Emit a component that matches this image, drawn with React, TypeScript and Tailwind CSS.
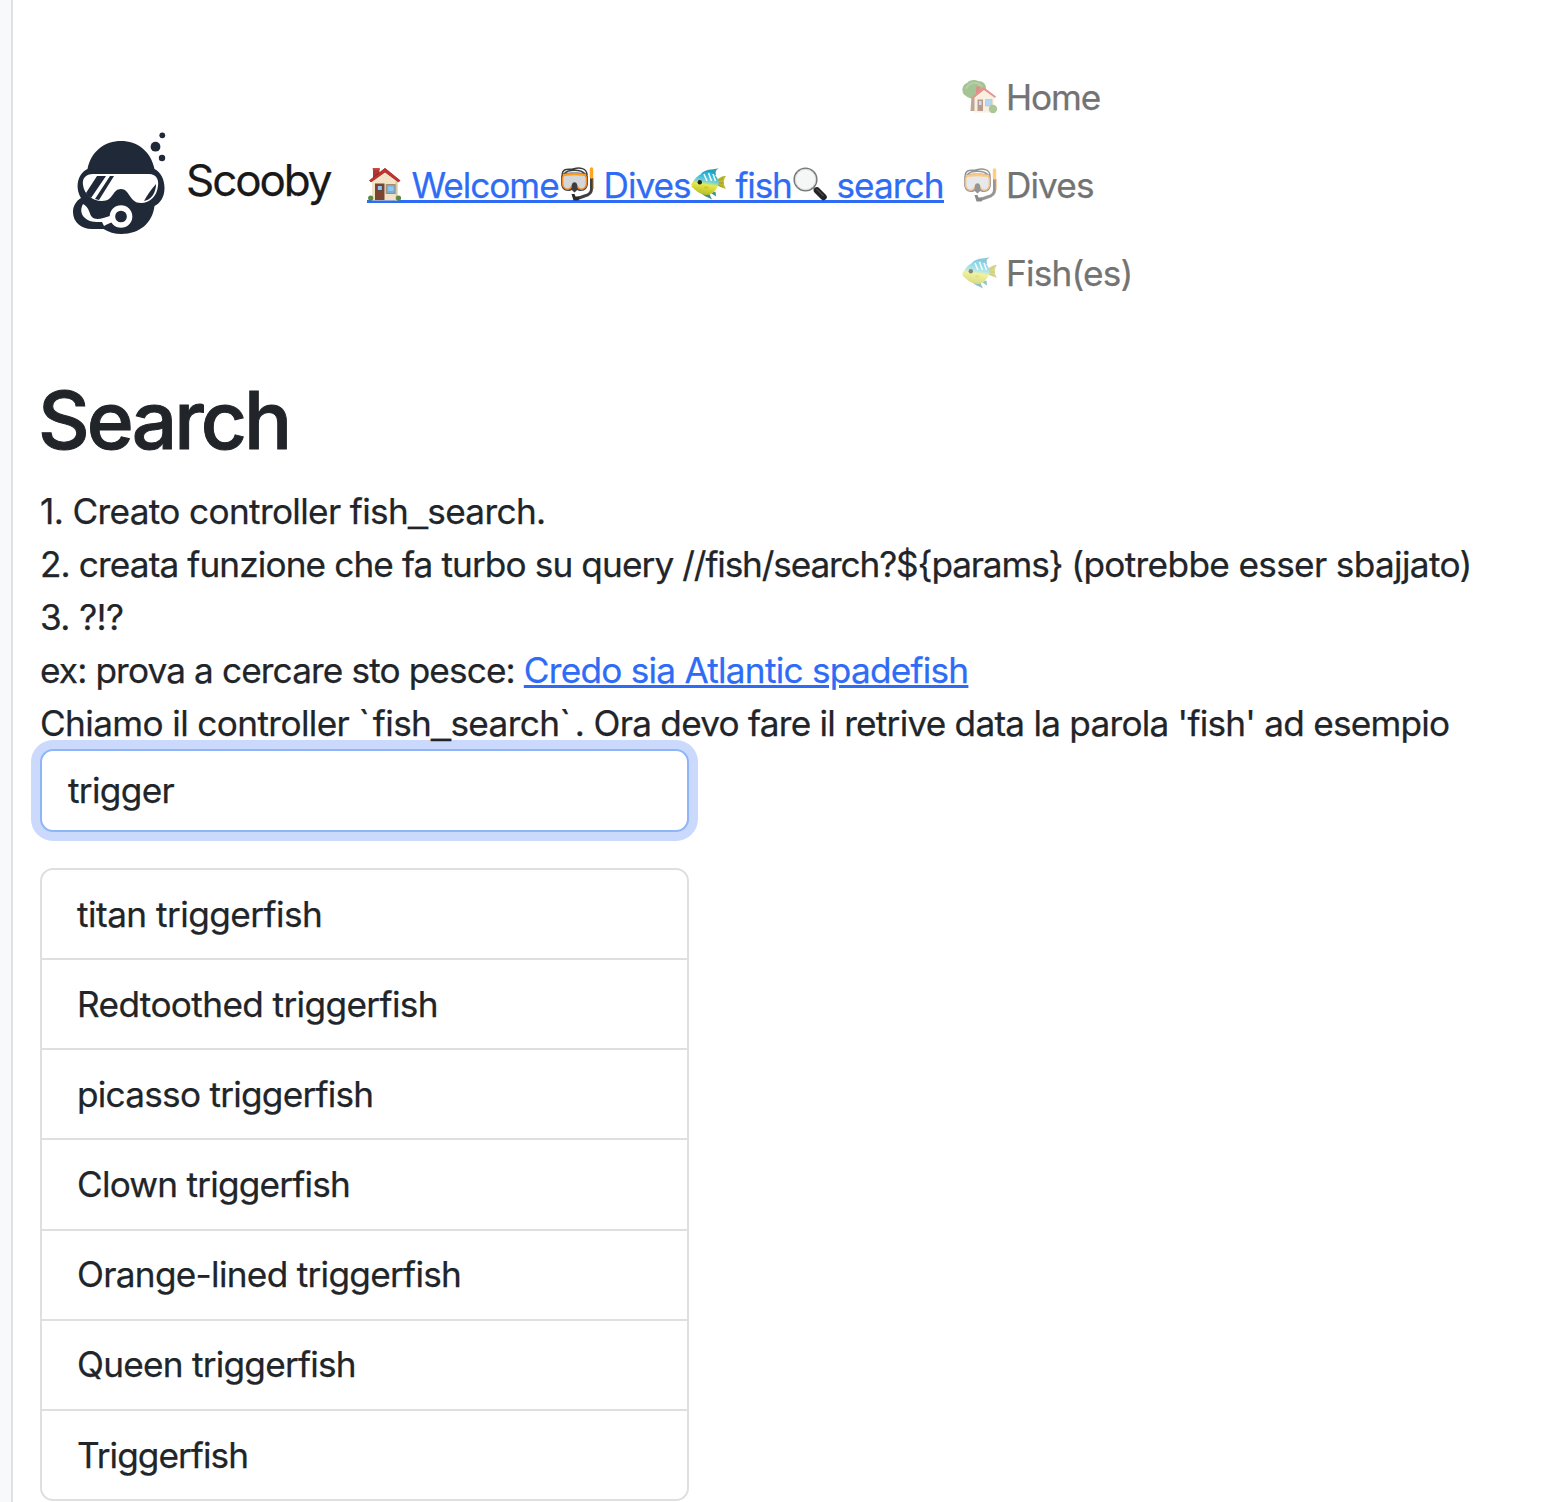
import type { ReactNode } from "react";

function HouseIcon() {
  return (
    <svg viewBox="0 0 36 36" className="relative block size-[36px] shrink-0">
      <path d="M6 2.500h6.500v8L6 14z" fill="#a83a32" />
      <path d="M5.700 2h7v2h-7z" fill="#c9473c" />
      <path d="M5 15 18 5l12.500 10v19.500H5z" fill="#f3e3c6" />
      <path d="M28.500 15h2v19.500h-2z" fill="#dbc7a5" />
      <path d="M2.500 14.500 18 2.300 33 14.500l-1.500 1.500L18 6 4 16z" fill="#cf2f2b" stroke="#7c2320" strokeWidth=".7" />
      <path d="M8 17.500h9.500v16.500H8z" fill="#7c4530" />
      <path d="M10.300 19.500h5v5h-5z" fill="#8fc8f2" stroke="#4f2b1f" strokeWidth=".7" />
      <path d="M19.200 18.500h9v9h-9z" fill="#7cabd0" stroke="#a28a6a" strokeWidth="1" />
      <path d="M21 20.500h5.500v4.500H21z" fill="#8cc8f2" />
      <circle cx="3.700" cy="32" r="2.600" fill="#5b8a3b" />
      <circle cx="31.500" cy="32" r="2.600" fill="#5b8a3b" />
    </svg>
  );
}

function GardenHouseIcon() {
  return (
    <svg viewBox="0 0 36 36" className="block size-[36px] shrink-0">
      <path d="M9.500 17h4l1 15h-6z" fill="#8b5d3b" />
      <path d="M.5 12C0 8 2 5 5 4c2-3 8-4 11-2 5 0 8 3 8 7 0 4-4 9-9 10-4 1.500-9 0-11-2-2-1-3.500-3-3.500-5z" fill="#5c9440" />
      <path d="M4 10c2-5 5-6 9-6 3 0 5 1 7 4" fill="none" stroke="#79ad55" strokeWidth="2" />
      <path d="M14 7.500h4.500v7H14z" fill="#c0392f" />
      <path d="M12.500 18.500 22 10l10 8.500v15H12.500z" fill="#f4e4c7" />
      <path d="M9.500 18.500 21.500 8 34 17.500l-1 1.500-11-8L10.500 20z" fill="#d63a33" />
      <path d="M15.500 20.500H21V32h-5.500z" fill="#81492f" />
      <path d="M17 22h2.500v4H17z" fill="#a9c7dd" />
      <path d="M23.500 20.500H30V27h-6.500z" fill="#78b6e6" stroke="#ac9472" strokeWidth=".8" />
      <circle cx="31" cy="30" r="4.200" fill="#699b43" />
    </svg>
  );
}

function MaskIcon() {
  return (
    <svg viewBox="0 0 36 36" className="relative block size-[36px] shrink-0">
      <path d="M3 8.500C4 1 10 4.500 15 2.800S28 2 28 9M5 8c4-5 17-5 21 0" fill="none" stroke="#3a3b3d" strokeWidth="1.500" />
      <path d="M32.500 4v19c0 4-3 6-7 7l-7 2.500" fill="none" stroke="#3e3f42" strokeWidth="3" strokeLinecap="round" />
      <path d="M32.500 3v8" stroke="#ffa51e" strokeWidth="3.400" strokeLinecap="round" />
      <path d="M34.200 12v11" stroke="#f08a18" strokeWidth="1" />
      <path d="M12.500 28h3l1 2.500h4l-1 4h-5z" fill="#292a2c" />
      <path d="M2 11c0-4 4-4.500 13.500-4.500S29 7 29 11v6c0 5-3 8-7 8-4 0-4.500-2-6.500-2S13 25 9 25c-4 0-7-3-7-8z" fill="#44474a" />
      <path d="M3.500 11.500C4 8.500 7 8.300 15.500 8.300s11.500.2 12 3.200v5.500c0 3.800-2.500 6.300-5.500 6.300-4 0-3.500-5.300-6.500-5.300s-2.500 5.300-6.500 5.300c-3 0-5.500-2.500-5.500-6.300z" fill="#d4d6d8" stroke="#f08a26" strokeWidth="1.600" />
      <path d="M4 9.300c4-1.500 19-1.500 23 0" fill="none" stroke="#ff9c1c" strokeWidth="2.200" />
      <path d="M12.800 24v-4.500c0-4.500 5.400-4.500 5.400 0V24l-2.700 2.500z" fill="#3b3d40" />
    </svg>
  );
}

function FishIcon({ id }: { id: string }) {
  return (
    <svg viewBox="0 0 36 36" className="relative block size-[36px] shrink-0">
      <defs>
        <linearGradient id={id} x1="0.600" y1="0" x2="0.400" y2="1">
          <stop offset="0.120" stopColor="#2bb4da" />
          <stop offset="0.420" stopColor="#7fd3d2" />
          <stop offset="0.540" stopColor="#e6e84c" />
          <stop offset="1" stopColor="#b7bb20" />
        </linearGradient>
      </defs>
      <path d="M10 8C14 3 20 4 28 2.300c-3 1.500-4 3-3 6.700z" fill="#2a9dbb" />
      <path d="M10 27c3 3 6 4 11 6.500L18 27zM20 27l5 3.500-.5-5z" fill="#3c8e91" />
      <path d="M25 15c3-3 5-5 10-5-3 4-3 8 0 13-4-1-7-3-10-4z" fill="#bdb92e" />
      <path d="M27 17h6M27 15l5-3M27 19l5 2" stroke="#8d9020" strokeWidth=".6" />
      <path d="M0 19C4 11 10 6.500 17 6c6 0 10 5 11 11-2 7-7 12-13 12C8 28 4 24 0 20l2-1z" fill={`url(#${id})`} />
      <path d="m13 8 3 7M17.500 7l3 8M22 8l2.500 7" stroke="#e9f9f8" strokeWidth="1.600" />
      <circle cx="8.800" cy="16.300" r="2.200" fill="#20251f" />
      <path d="M14 20c2 0 3 1 4 2-2 1-4 1-5 0" fill="#c8cb2c" />
    </svg>
  );
}

function LensIcon() {
  return (
    <svg viewBox="0 0 36 36" className="relative block size-[36px] shrink-0">
      <path d="m21 21 3 3" stroke="#8d8f91" strokeWidth="3" />
      <path d="m25 24.500 6.500 6.500" stroke="#232426" strokeWidth="6.500" strokeLinecap="round" />
      <path d="m24.500 23 7 7" stroke="#65686a" strokeWidth="1" />
      <circle cx="13.500" cy="13.500" r="11.300" fill="#f5f6f6" stroke="#77797b" strokeWidth="1.600" />
      <circle cx="13.500" cy="13.500" r="10.200" fill="none" stroke="#d8d9da" strokeWidth="1" />
    </svg>
  );
}

function Logo() {
  return (
    <svg viewBox="0 0 120 125" className="block h-[125px] w-[120px]">
      <g fill="#1f2937">
        <circle cx="102.300" cy="15.300" r="2.900" />
        <circle cx="95.500" cy="26.700" r="4.900" />
        <circle cx="102" cy="38" r="3.200" />
        <path d="M27.500 49C31 31 45 21 61 21s30 10 33.500 28c6 3 10 10 10 19s-4 15-10 18c-2 17-15 28-33 28-7 0-13-2-18-5H32c-11 0-19-7-19-17 0-6 3-11 8-14-6-10-4-24 6.500-29z" />
      </g>
      <path d="M33 54h56c7 0 10 5 9 12-1 10-8 17-17 17-12 0-11-14-20-14S54 81 42 81C32 81 24 74 23 65c-1-7 3-11 10-11z" fill="#fff" />
      <path d="M37 56h9L31 78c-2-1-4-3-5-5zM50 56h4L39 80l-4-1z" fill="#1f2937" />
      <path d="M96 64c0 9-5 16-12 17 3-6 7-11 12-17z" fill="#1f2937" />
      <path d="M23 84c-3 5-2 11 2 14 4 4 9 4 17 4l2 4c3-2 6-3 9-4l-3-6c-7 2-14 5-18 1-3-3-2-9-9-13z" fill="#fff" />
      <circle cx="61" cy="96.500" r="8.600" fill="#1f2937" stroke="#fff" strokeWidth="5.500" />
    </svg>
  );
}

function InlineLink({ icon, label, className }: { icon: ReactNode; label: string; className: string }) {
  return (
    <a href="#" className={`flex h-[37px] border-b-[3px] border-[#2f6cf6] ${className}`}>
      {icon}
      <span className="ml-[8.5px] text-[35.2px] leading-[39px] whitespace-nowrap text-[#2f6cf6]">{label}</span>
    </a>
  );
}

function SideLink({ icon, label, className }: { icon: ReactNode; label: string; className: string }) {
  return (
    <a href="#" className={`flex h-[88px] items-center ${className}`}>
      <span className="opacity-55">{icon}</span>
      <span className="ml-[8px] text-[35.2px] leading-[53px] whitespace-nowrap text-[#737373]">{label}</span>
    </a>
  );
}

function Underscore() {
  return <span className="relative -top-[2px] font-['Liberation_Sans',sans-serif] tracking-[-0.5px]">_</span>;
}

const fish = [
  { name: "titan triggerfish", tracking: "tracking-[-0.53px]" },
  { name: "Redtoothed triggerfish", tracking: "tracking-[-0.62px]" },
  { name: "picasso triggerfish", tracking: "tracking-[-0.75px]" },
  { name: "Clown triggerfish", tracking: "tracking-[-0.78px]" },
  { name: "Orange-lined triggerfish", tracking: "tracking-[-0.7px]" },
  { name: "Queen triggerfish", tracking: "tracking-[-0.75px]" },
  { name: "Triggerfish", tracking: "tracking-[-0.95px]" },
];

export default function App() {
  return (
    <div className="flex h-[1502px] w-[1562px] overflow-hidden bg-white font-['Inter',sans-serif] text-[#212529] [-webkit-text-stroke:0.25px]">
      <aside className="w-[13px] shrink-0 border-r-2 border-[#dee2e6] bg-[#f8f9fb]" />
      <main className="w-[1549px] pl-[27px]">
        <nav className="flex h-[371px] pl-[20px]">
          <a href="#" className="mt-[120px] flex">
            <Logo />
            <span className="ml-[6px] mt-[27px] w-[181px] text-[44px] leading-[66px] tracking-[-2.1px] text-[#191919]">Scooby</span>
          </a>
          <div className="mt-[166px] flex">
            <InlineLink icon={<HouseIcon />} label="Welcome" className="w-[192px] tracking-[-1.05px]" />
            <InlineLink icon={<MaskIcon />} label="Dives" className="w-[132px] tracking-[-1px]" />
            <InlineLink icon={<FishIcon id="navfish" />} label="fish" className="w-[101px] tracking-[-1.2px]" />
            <InlineLink icon={<LensIcon />} label="search" className="w-[152px] tracking-[-0.95px]" />
          </div>
          <div className="mt-[53px] ml-[18px] flex flex-col">
            <SideLink icon={<GardenHouseIcon />} label="Home" className="tracking-[-1.1px]" />
            <SideLink icon={<MaskIcon />} label="Dives" className="tracking-[-0.9px]" />
            <SideLink icon={<FishIcon id="sidefish" />} label="Fish(es)" className="tracking-[-0.8px]" />
          </div>
        </nav>
        <h1 className="-ml-[2px] h-[113.5px] text-[80px] leading-[98px] font-medium tracking-[-2.9px] [-webkit-text-stroke:1px]">Search</h1>
        <div className="text-[35.2px] leading-[52.8px] whitespace-nowrap">
          <p className="tracking-[-0.65px]">1. Creato controller fish<Underscore />search.</p>
          <p className="tracking-[-0.89px]">
            {"2. creata funzione che fa turbo su query "}
            <span className="tracking-[-1.14px]">{"//fish/search?${params} "}</span>
            <span className="tracking-[-0.65px]">(potrebbe esser sbajjato)</span>
          </p>
          <p className="tracking-[-0.6px]">3. ?!?</p>
          <p className="tracking-[-0.88px]">ex: prova a cercare sto pesce: <a href="#" className="tracking-[-0.75px] text-[#2f6cf6] underline">Credo sia Atlantic spadefish</a></p>
          <p className="tracking-[-0.76px]">
            <span className="tracking-[-0.62px]">Chiamo il controller <span className="tracking-[3px]">`</span>fish<Underscore />search<span className="tracking-[4px]">`</span>. </span>
            Ora devo fare il retrive data la parola 'fish' ad esempio
          </p>
        </div>
        <div className="-mt-[1.5px] flex h-[83px] w-[649px] items-center rounded-[13px] border-2 border-[#8fb5f9] bg-white pl-[26px] text-[35.2px] tracking-[-0.67px] shadow-[0_0_0_9px_#cbd9fc]">trigger</div>
        <ul className="mt-[36px] w-[649px] rounded-[13px] border-2 border-[#dedfe0]">
          {fish.map(({ name, tracking }) => (
            <li key={name} className={`flex h-[90.15px] items-center border-b-2 border-[#dedfe0] pl-[35px] text-[35.2px] last:h-[88.200px] last:border-b-0 ${tracking}`}>{name}</li>
          ))}
        </ul>
      </main>
    </div>
  );
}
